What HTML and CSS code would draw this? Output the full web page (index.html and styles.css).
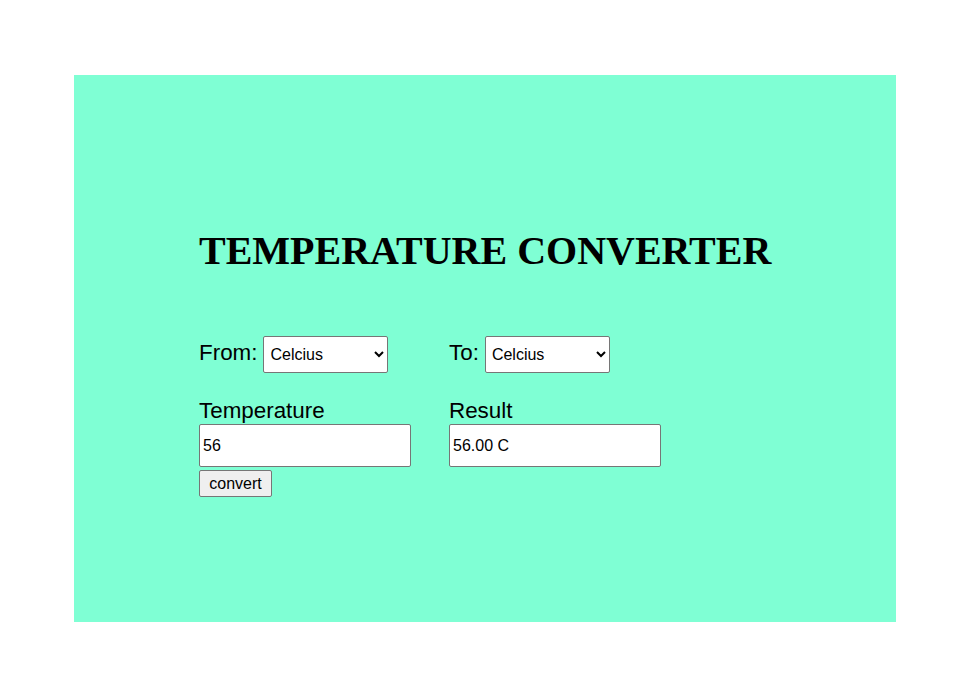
FILE: index.html
```html
<!DOCTYPE html>
<html>
<head>
<meta charset="utf-8">
<title>Temperature Converter</title>
<link rel="stylesheet" href="styles.css">
</head>
<body>
<div class="box">
  <h1 class="title">TEMPERATURE CONVERTER</h1>
  <div class="row units">
    <div class="col">
      <label class="lbl">From:</label>
      <select class="sel"><option>Celcius</option><option>Fahrenheit</option><option>Kelvin</option></select>
    </div>
    <div class="col">
      <label class="lbl">To:</label>
      <select class="sel"><option>Celcius</option><option>Fahrenheit</option><option>Kelvin</option></select>
    </div>
  </div>
  <div class="row values">
    <div class="col stack">
      <label class="lbl">Temperature</label>
      <input class="inp" type="text" value="56">
      <button class="btn">convert</button>
    </div>
    <div class="col stack">
      <label class="lbl">Result</label>
      <input class="inp" type="text" value="56.00 C">
    </div>
  </div>
</div>
</body>
</html>
```
FILE: styles.css
```css
html, body { margin: 0; padding: 0; background: #fff; }
.box {
  width: 822px;
  height: 547px;
  margin: 75px 0 0 74px;
  background: #7fffd4;
  box-sizing: border-box;
  padding: 153px 0 0 125px;
  font-family: "Liberation Sans", Arial, sans-serif;
}
.title {
  margin: 0;
  font-family: "Liberation Serif", "Times New Roman", serif;
  font-weight: bold;
  font-size: 40px;
  line-height: 46px;
  color: #000;
}
.row { display: flex; }
.col { width: 250px; }
.units { margin-top: 62px; }
.units .col { display: flex; align-items: center; gap: 6px; }
.lbl { font-size: 22.4px; line-height: 26px; color: #000; }
.units .lbl { position: relative; top: -2px; }
.sel {
  width: 125px; height: 37px;
  font-family: "Liberation Sans", Arial, sans-serif;
  font-size: 16px;
  border: 1px solid #767676; border-radius: 2px;
  background: #fff; padding: 0 2px;
}
.values { margin-top: 25px; }
.stack { display: flex; flex-direction: column; align-items: flex-start; }
.inp {
  width: 212px; height: 43px; box-sizing: border-box;
  font-family: "Liberation Sans", Arial, sans-serif;
  font-size: 16px;
  border: 1px solid #767676; border-radius: 2px;
  padding: 0 3px; margin: 0;
}
.btn {
  margin-top: 3px;
  width: 73px; height: 27px;
  font-family: "Liberation Sans", Arial, sans-serif;
  font-size: 16px;
  border: 1px solid #767676; border-radius: 2px;
  background: #efefef; padding: 0;
}
```
